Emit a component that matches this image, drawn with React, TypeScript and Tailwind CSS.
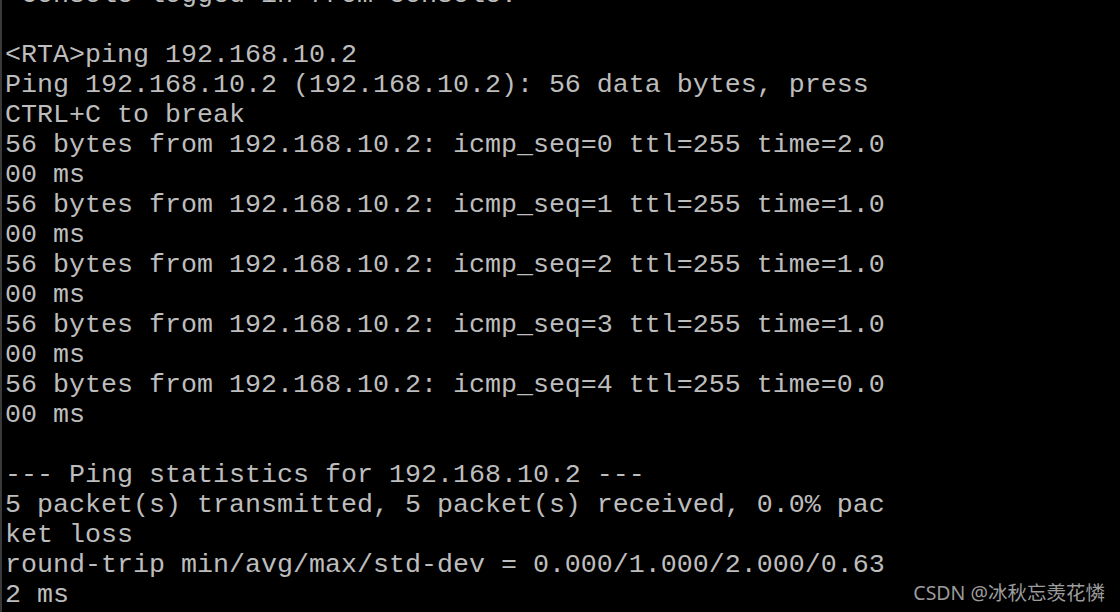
import React from "react";

const lines: string[] = [
  " Console logged in from console.",
  "",
  "<RTA>ping 192.168.10.2",
  "Ping 192.168.10.2 (192.168.10.2): 56 data bytes, press",
  "CTRL+C to break",
  "56 bytes from 192.168.10.2: icmp_seq=0 ttl=255 time=2.0",
  "00 ms",
  "56 bytes from 192.168.10.2: icmp_seq=1 ttl=255 time=1.0",
  "00 ms",
  "56 bytes from 192.168.10.2: icmp_seq=2 ttl=255 time=1.0",
  "00 ms",
  "56 bytes from 192.168.10.2: icmp_seq=3 ttl=255 time=1.0",
  "00 ms",
  "56 bytes from 192.168.10.2: icmp_seq=4 ttl=255 time=0.0",
  "00 ms",
  "",
  "--- Ping statistics for 192.168.10.2 ---",
  "5 packet(s) transmitted, 5 packet(s) received, 0.0% pac",
  "ket loss",
  "round-trip min/avg/max/std-dev = 0.000/1.000/2.000/0.63",
  "2 ms",
];

export default function App() {
  return (
    <div className="w-[1120px] h-[612px] bg-black overflow-hidden flex relative">
      <div className="w-[2px] h-full bg-[#3a3a3a] shrink-0" />
      <div
        className="flex-1 flex flex-col mt-[-20px] pl-[3px] text-[#bdbdbd] text-[26.67px] leading-[30px] whitespace-pre"
        style={{ fontFamily: '"Liberation Mono", "Courier New", monospace' }}
      >
        {lines.map((l, i) => (
          <div key={i} className="h-[30px]">
            {l}
          </div>
        ))}
      </div>
      <div
        className="absolute right-[15px] bottom-[7px] text-[19.5px] leading-[24px] text-[#9c9c9c]"
        style={{ fontFamily: '"Noto Sans", "Noto Sans CJK SC", sans-serif' }}
      >
        CSDN @冰秋忘羡花憐
      </div>
    </div>
  );
}
